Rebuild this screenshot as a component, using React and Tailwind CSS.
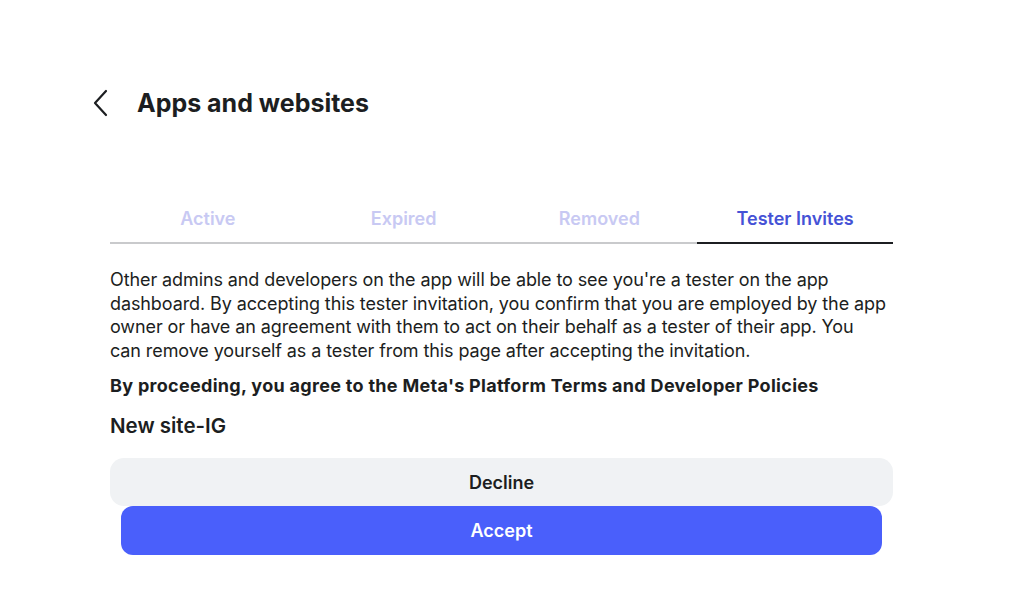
import React from 'react';

const tabs = ['Active', 'Expired', 'Removed', 'Tester Invites'];

export default function App() {
  const current = 'Tester Invites';

  return (
    <div className="min-h-[593px] w-full bg-white text-[#1c1e21]" style={{ fontFamily: 'Inter, "Noto Sans", sans-serif' }}>
      {/* Header */}
      <div className="flex items-center pl-[90px] pt-[88px]">
        <button className="flex h-[30px] w-[20px] items-center justify-center">
          <svg width="18" height="28" viewBox="0 0 18 28" fill="none">
            <path d="M15 2 L4 14 L15 26" stroke="#1c1e21" strokeWidth="2.2" strokeLinecap="round" strokeLinejoin="round" />
          </svg>
        </button>
        <h1 className="ml-[27px] text-[25px] font-bold leading-[30px]">Apps and websites</h1>
      </div>

      <div className="ml-[110px] mt-[88px] w-[783px]">
        {/* Tabs */}
        <div className="grid grid-cols-4">
          {tabs.map((t) => (
            <div
              key={t}
              className={
                t === current
                  ? 'flex h-[38px] items-start justify-center border-b-2 border-[#1c1e21] pt-[1px] text-[18px] font-semibold leading-[24px] text-[#4552d6]'
                  : 'flex h-[38px] items-start justify-center border-b-2 border-[#c9cacc] pt-[1px] text-[18px] font-semibold leading-[24px] text-[#c8c9f3]'
              }
            >
              {t}
            </div>
          ))}
        </div>

        {/* Body */}
        <p className="mt-[24px] w-[777px] text-[18px] leading-[23.5px] tracking-[-0.1px]">
          Other admins and developers on the app will be able to see you're a tester on the app dashboard. By accepting this tester invitation, you confirm that you are employed by the app owner or have an agreement with them to act on their behalf as a tester of their app. You can remove yourself as a tester from this page after accepting the invitation.
        </p>
        <p className="mt-[12px] text-[18px] font-bold leading-[24px] tracking-[0.3px]">
          By proceeding, you agree to the Meta's Platform Terms and Developer Policies
        </p>
        <h2 className="mt-[15px] text-[20.5px] font-semibold leading-[26px]">New site-IG</h2>

        {/* Actions */}
        <div className="mt-[19px] flex flex-col items-center">
          <button className="flex h-[48px] w-full items-center justify-center rounded-[14px] bg-[#f0f2f4] text-[18px] font-semibold text-[#1c1e21]">
            Decline
          </button>
          <button className="flex h-[49px] w-[761px] items-center justify-center rounded-[12px] bg-[#4a5ffb] text-[18px] font-semibold text-white">
            Accept
          </button>
        </div>
      </div>
    </div>
  );
}
